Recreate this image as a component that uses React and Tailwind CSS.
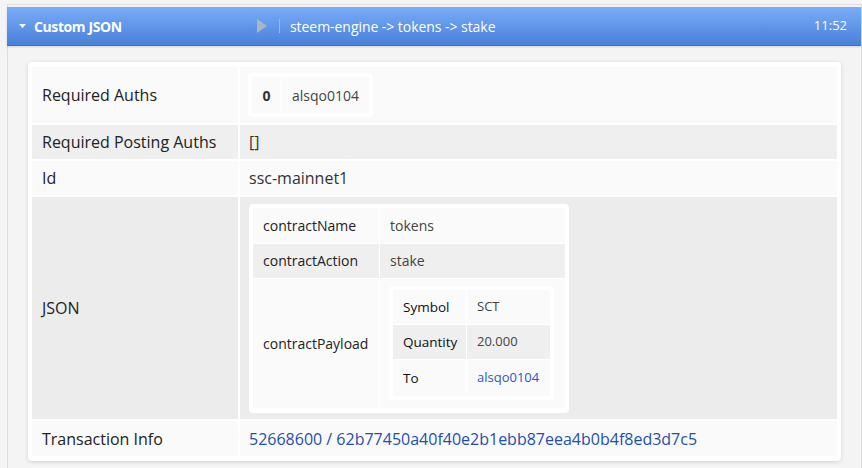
import React from "react";

const font = { fontFamily: '"Open Sans", "Liberation Sans", sans-serif' };

function Row({ label, bg, h, children, valueClass = "" }) {
  return (
    <>
      <div className={`${bg} ${h} flex items-center pl-[10px] text-[16px] text-[#222]`}>{label}</div>
      <div className={`${bg} ${h} flex items-center pl-[9px] text-[16px] text-[#333] ${valueClass}`}>{children}</div>
    </>
  );
}

export default function App() {
  return (
    <div className="w-[862px] h-[468px] bg-[#f4f4f4] overflow-hidden" style={font}>
      <div className="mt-[4px] ml-[7px] h-[464px] border-t border-l border-r border-[#dedede] pt-[2px] bg-[#f4f4f4]">
        {/* header */}
        <div className="-ml-px h-[39px] pl-[12px] flex items-center text-white bg-gradient-to-b from-[#7aacf8] to-[#4980d8] border-b border-[#3d72c9] shadow-[0_1px_2px_rgba(0,0,0,0.15)]">
          <svg width="7" height="4" viewBox="0 0 7 4"><path d="M0 0h7L3.5 4z" fill="#fff" /></svg>
          <div className="ml-[8px] w-[223px] font-bold text-[14px] tracking-[-0.4px]">Custom JSON</div>
          <svg width="10" height="14" viewBox="0 0 10 14"><path d="M0 0L10 7L0 14z" fill="#a9b6c8" /></svg>
          <div className="ml-[12px] w-px h-[14px] bg-[#9dbbe8]" />
          <div className="ml-[10px] text-[14px] flex-1 tracking-[-0.05px]">steem-engine -&gt; tokens -&gt; stake</div>
          <div className="text-[13px] mr-[14px]">11:52</div>
        </div>
        {/* card */}
        <div className="mt-[16px] ml-[20px] w-[813px] bg-white rounded-[4px] shadow-[0_1px_4px_rgba(0,0,0,0.14)] pt-[5px] pl-[4px] pr-[4px] pb-[5px]">
          <div className="grid grid-cols-[206px_1fr] gap-[2px]">
            <Row label="Required Auths" bg="bg-[#fafafa]" h="h-[56px]" valueClass="!pl-[8px]">
              <div className="bg-white rounded-[4px] p-[4px] flex gap-px text-[14px] text-[#333]">
                <div className="w-[29px] h-[36px] bg-[#fafafa] flex items-center justify-center font-bold">0</div>
                <div className="w-[87px] h-[36px] bg-[#fafafa] flex items-center pl-[10px] text-[#444]">alsqo0104</div>
              </div>
            </Row>
            <Row label="Required Posting Auths" bg="bg-[#efefef]" h="h-[34px]">[]</Row>
            <Row label="Id" bg="bg-[#fafafa]" h="h-[34px]">ssc-mainnet1</Row>
            <Row label="JSON" bg="bg-[#ececec]" h="h-[222px]" valueClass="!pl-[9px]">
              <div className="bg-white rounded-[4px] p-[4px] pb-[5px] w-[320px] text-[14px]">
                <div className="grid grid-cols-[126px_1fr] gap-[1px]">
                  <div className="h-[35px] bg-[#fafafa] flex items-center pl-[10px] text-[#222]">contractName</div>
                  <div className="h-[35px] bg-[#fafafa] flex items-center pl-[10px] text-[#444]">tokens</div>
                  <div className="h-[34px] bg-[#efefef] flex items-center pl-[10px] text-[#222]">contractAction</div>
                  <div className="h-[34px] bg-[#efefef] flex items-center pl-[10px] text-[#444]">stake</div>
                  <div className="h-[129px] bg-[#fafafa] flex items-center pl-[10px] text-[#222]">contractPayload</div>
                  <div className="h-[129px] bg-[#fafafa] flex items-center pl-[9px]">
                    <div className="bg-white rounded-[4px] p-[4px] w-[165px] text-[13px]">
                      <div className="grid grid-cols-[73px_1fr] gap-[1px]">
                        <div className="h-[34px] bg-[#fafafa] flex items-center pl-[10px] text-[#111] text-[13.5px]">Symbol</div>
                        <div className="h-[34px] bg-[#fafafa] flex items-center pl-[10px] text-[#444]">SCT</div>
                        <div className="h-[34px] bg-[#efefef] flex items-center pl-[10px] text-[#111] text-[13.5px]">Quantity</div>
                        <div className="h-[34px] bg-[#efefef] flex items-center pl-[10px] text-[#444]">20.000</div>
                        <div className="h-[36px] bg-[#fafafa] flex items-center pl-[10px] text-[#111] text-[13.5px]">To</div>
                        <div className="h-[36px] bg-[#fafafa] flex items-center pl-[10px] text-[#2f55c0]">alsqo0104</div>
                      </div>
                    </div>
                  </div>
                </div>
              </div>
            </Row>
            <Row label="Transaction Info" bg="bg-[#fafafa]" h="h-[35px]">
              <span className="text-[#1f4fae]">52668600 / 62b77450a40f40e2b1ebb87eea4b0b4f8ed3d7c5</span>
            </Row>
          </div>
        </div>
      </div>
    </div>
  );
}
